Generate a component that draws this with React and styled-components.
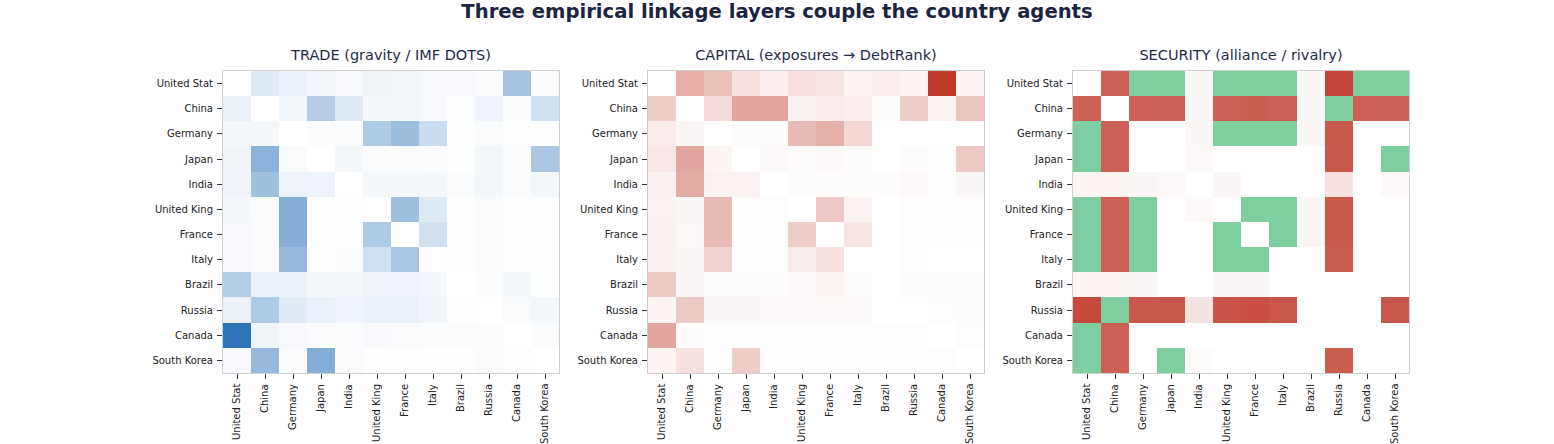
import React from 'react';
import styled, { createGlobalStyle } from 'styled-components';

const GlobalStyle = createGlobalStyle`
  html, body {
    margin: 0;
    padding: 0;
    background: #ffffff;
  }
  body {
    font-family: "DejaVu Sans", "Liberation Sans", sans-serif;
  }
`;

const COUNTRIES = [
  'United Stat', 'China', 'Germany', 'Japan', 'India', 'United King',
  'France', 'Italy', 'Brazil', 'Russia', 'Canada', 'South Korea',
];

const BLUE = [44, 115, 184];
const RED = [192, 57, 43];
const GREEN = [125, 207, 159];

const TRADE = [
  [0, 0.15, 0.1, 0.06, 0.04, 0.07, 0.06, 0.04, 0.04, 0.03, 0.42, 0.03],
  [0.1, 0, 0.06, 0.35, 0.15, 0.05, 0.05, 0.04, 0.01, 0.08, 0.02, 0.22],
  [0.05, 0.05, 0, 0.02, 0.02, 0.38, 0.47, 0.25, 0.01, 0.03, 0.01, 0.01],
  [0.07, 0.55, 0.03, 0, 0.05, 0.03, 0.03, 0.02, 0.01, 0.05, 0.02, 0.4],
  [0.08, 0.45, 0.08, 0.08, 0, 0.05, 0.05, 0.05, 0.02, 0.05, 0.02, 0.05],
  [0.05, 0.03, 0.58, 0.01, 0.01, 0, 0.45, 0.15, 0.01, 0.02, 0.01, 0.01],
  [0.04, 0.03, 0.58, 0.01, 0.01, 0.38, 0, 0.22, 0.01, 0.02, 0.01, 0.01],
  [0.04, 0.03, 0.5, 0.01, 0.02, 0.22, 0.4, 0, 0.01, 0.02, 0.01, 0.01],
  [0.35, 0.1, 0.1, 0.05, 0.05, 0.08, 0.08, 0.06, 0, 0.02, 0.05, 0.01],
  [0.1, 0.38, 0.15, 0.1, 0.08, 0.1, 0.1, 0.07, 0.01, 0, 0.03, 0.05],
  [1, 0.07, 0.04, 0.03, 0.03, 0.04, 0.03, 0.02, 0.02, 0.02, 0, 0.02],
  [0.04, 0.5, 0.02, 0.58, 0.03, 0.01, 0.01, 0.01, 0.01, 0.03, 0.01, 0],
];

const CAPITAL = [
  [0, 0.4, 0.32, 0.15, 0.08, 0.15, 0.13, 0.06, 0.08, 0.05, 1, 0.05],
  [0.25, 0, 0.17, 0.45, 0.45, 0.07, 0.1, 0.08, 0.02, 0.25, 0.06, 0.3],
  [0.1, 0.04, 0, 0.02, 0.02, 0.35, 0.4, 0.2, 0, 0, 0, 0],
  [0.12, 0.45, 0.05, 0, 0.03, 0.02, 0.03, 0.02, 0, 0.02, 0.01, 0.27],
  [0.07, 0.42, 0.06, 0.06, 0, 0.02, 0.02, 0.02, 0.02, 0.03, 0.01, 0.04],
  [0.06, 0.04, 0.35, 0.01, 0.01, 0, 0.28, 0.06, 0, 0.01, 0.01, 0.01],
  [0.07, 0.03, 0.35, 0.01, 0.01, 0.25, 0, 0.13, 0, 0.01, 0.01, 0.01],
  [0.07, 0.04, 0.22, 0.01, 0.01, 0.1, 0.15, 0, 0, 0.01, 0, 0],
  [0.27, 0.04, 0.02, 0.02, 0.02, 0.03, 0.05, 0.02, 0, 0.02, 0.02, 0.02],
  [0.05, 0.27, 0.04, 0.04, 0.03, 0.03, 0.03, 0.03, 0, 0, 0.01, 0.02],
  [0.45, 0.02, 0.01, 0.01, 0.01, 0.01, 0.01, 0.01, 0.01, 0.01, 0, 0.01],
  [0.05, 0.15, 0.01, 0.25, 0.01, 0.01, 0.01, 0.01, 0.01, 0.01, 0.01, 0],
];

// positive = alliance (green), negative = rivalry (red)
const G = 1;
const R = -0.8;
const SECURITY = [
  [0, R, G, G, -0.04, G, G, G, -0.04, -0.95, G, G],
  [R, 0, R, R, -0.04, R, -0.82, R, -0.04, G, R, R],
  [G, R, 0, 0, -0.04, G, G, G, -0.04, -0.84, 0, 0],
  [G, R, 0, 0, -0.03, 0, 0, 0, 0, -0.84, 0, G],
  [-0.05, -0.05, -0.04, -0.03, 0, -0.04, 0, 0, 0, -0.14, 0, -0.03],
  [G, R, G, 0, -0.03, 0, G, G, -0.04, -0.84, 0, 0],
  [G, R, G, 0, 0, G, 0, G, -0.04, -0.84, 0, 0],
  [G, R, G, 0, 0, G, G, 0, 0, -0.82, 0, 0],
  [-0.05, -0.05, -0.04, 0, 0, -0.04, -0.04, 0, 0, 0, 0, 0],
  [-0.92, G, -0.85, -0.85, -0.14, -0.86, -0.88, -0.85, 0, 0, 0, -0.85],
  [G, R, 0, 0, 0, 0, 0, 0, 0, 0, 0, 0],
  [G, R, 0, G, -0.02, 0, 0, 0, 0, -0.82, 0, 0],
];

const mix = (base, t) => {
  const c = base.map((v) => Math.round(255 - (255 - v) * t));
  return `rgb(${c[0]}, ${c[1]}, ${c[2]})`;
};

const signedColor = (v) => (v >= 0 ? mix(GREEN, v) : mix(RED, -v));

const LAYERS = [
  { title: 'TRADE (gravity / IMF DOTS)', data: TRADE, color: (v) => mix(BLUE, v) },
  { title: 'CAPITAL (exposures \u2192 DebtRank)', data: CAPITAL, color: (v) => mix(RED, v) },
  { title: 'SECURITY (alliance / rivalry)', data: SECURITY, color: signedColor },
];

const Page = styled.div`
  width: 1554px;
  height: 444px;
  overflow: hidden;
  background: #ffffff;
`;

const Title = styled.h1`
  margin: 0;
  height: 24px;
  line-height: 24px;
  text-align: center;
  font-size: 19.6px;
  font-weight: bold;
  color: #1b2440;
`;

const PanelRow = styled.div`
  display: flex;
  gap: 14px;
  margin-top: 22px;
  padding-left: 148px;
`;

const Panel = styled.section`
  display: grid;
  grid-template-columns: 75px 336px;
  grid-template-rows: 25px 302px auto;
`;

const PanelTitle = styled.h2`
  grid-column: 2;
  grid-row: 1;
  align-self: start;
  margin: 0;
  line-height: 18px;
  text-align: center;
  font-size: 14.5px;
  font-weight: normal;
  color: #1f2b48;
  white-space: nowrap;
`;

const YLabels = styled.div`
  grid-column: 1;
  grid-row: 2;
  display: grid;
  grid-template-rows: repeat(12, 1fr);
`;

const YLabel = styled.div`
  display: flex;
  align-items: center;
  justify-content: flex-end;
  gap: 4px;
  font-size: 10px;
  color: #222222;
  white-space: nowrap;
  padding-right: 1px;

  &::after {
    content: '';
    width: 5px;
    height: 1px;
    background: #333333;
  }
`;

const Plot = styled.div`
  grid-column: 2;
  grid-row: 2;
  display: grid;
  grid-template-columns: repeat(12, 1fr);
  grid-template-rows: repeat(12, 1fr);
  box-shadow: 0 0 0 1px #cfcfcf;
`;

const Cell = styled.div`
  min-width: 0;
  min-height: 0;
`;

const XLabels = styled.div`
  grid-column: 2;
  grid-row: 3;
  display: grid;
  grid-template-columns: repeat(12, 1fr);
  padding-top: 1px;
`;

const XLabel = styled.div`
  display: flex;
  flex-direction: column;
  align-items: center;

  &::before {
    content: '';
    width: 1px;
    height: 5px;
    background: #333333;
    margin-bottom: 5px;
  }
`;

const XText = styled.span`
  writing-mode: vertical-rl;
  transform: rotate(180deg);
  height: 60px;
  text-align: end;
  font-size: 10px;
  line-height: 12px;
  color: #222222;
  white-space: nowrap;
`;

const Heatmap = ({ title, data, color }) => (
  <Panel>
    <PanelTitle>{title}</PanelTitle>
    <YLabels>
      {COUNTRIES.map((c) => (
        <YLabel key={c}>{c}</YLabel>
      ))}
    </YLabels>
    <Plot>
      {data.map((row, i) =>
        row.map((v, j) => (
          <Cell key={`${i}-${j}`} style={{ background: color(v) }} />
        )),
      )}
    </Plot>
    <XLabels>
      {COUNTRIES.map((c) => (
        <XLabel key={c}>
          <XText>{c}</XText>
        </XLabel>
      ))}
    </XLabels>
  </Panel>
);

const App = () => (
  <>
    <GlobalStyle />
    <Page>
      <Title>Three empirical linkage layers couple the country agents</Title>
      <PanelRow>
        {LAYERS.map((layer) => (
          <Heatmap key={layer.title} {...layer} />
        ))}
      </PanelRow>
    </Page>
  </>
);

export default App;
